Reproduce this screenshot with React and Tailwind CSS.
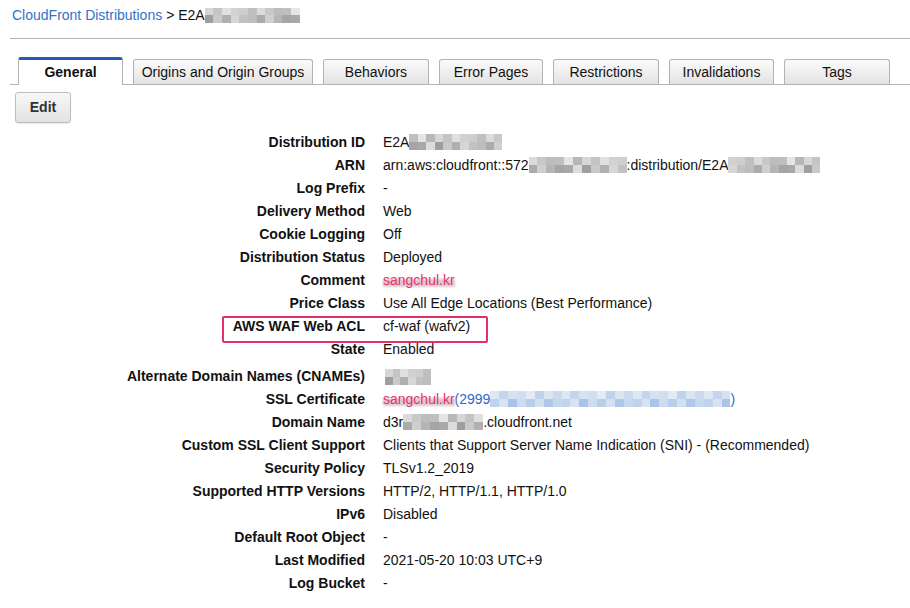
const font = { fontFamily: '"Liberation Sans", Arial, sans-serif' };

const grays = ["#c9c9c9", "#b5b5b5", "#d6d6d6", "#a9a9a9", "#bdbdbd", "#9f9f9f", "#cfcfcf", "#b0b0b0", "#a5a5a5", "#c2c2c2", "#dcdcdc", "#ababab"];
const blues = ["#b9cfe9", "#cddcee", "#a9c4e6", "#d7e3f2", "#bfd3ec", "#c6d8ee", "#afc8e7", "#d2e0f1"];

function Blur({ w, h = 16, palette = grays, cell = 9, seed = 0, className = "" }) {
  const n = Math.ceil(w / cell);
  const cells = [];
  for (let r = 0; r < 2; r++) {
    for (let i = 0; i < n; i++) {
      const c = palette[(i * 7 + r * 5 + seed * 3) % palette.length];
      cells.push(<div key={r + "-" + i} style={{ background: c, opacity: r === 0 ? 0.75 : 1 }} />);
    }
  }
  return (
    <span
      className={`inline-grid align-middle ${className}`}
      style={{ width: w, height: h, gridTemplateColumns: `repeat(${n}, 1fr)`, gridTemplateRows: "1fr 1fr" }}
    >
      {cells}
    </span>
  );
}

const tabs = [
  { name: "General", w: "w-[105px]", active: true },
  { name: "Origins and Origin Groups", w: "w-[180px]" },
  { name: "Behaviors", w: "w-[106px]" },
  { name: "Error Pages", w: "w-[104px]" },
  { name: "Restrictions", w: "w-[106px]" },
  { name: "Invalidations", w: "w-[105px]" },
  { name: "Tags", w: "w-[106px]" },
];

const Pink = ({ children }) => (
  <span className="relative inline-block">
    <span className="absolute left-0 right-0 top-[9px] h-[8px] bg-[#d9c9cf] blur-[1px]" />
    <span className="relative text-[#e8336d]">{children}</span>
  </span>
);

const rows = [
  ["Distribution ID", <>E2A<Blur w={93} seed={1} className="-mt-[2px]" /></>],
  ["ARN", <>arn:aws:cloudfront::572<Blur w={98} seed={2} className="-mt-[2px]" />:distribution/E2A<Blur w={92} seed={3} className="-mt-[2px]" /></>],
  ["Log Prefix", "-"],
  ["Delivery Method", "Web"],
  ["Cookie Logging", "Off"],
  ["Distribution Status", "Deployed"],
  ["Comment", <Pink>sangchul.kr</Pink>],
  ["Price Class", "Use All Edge Locations (Best Performance)"],
  ["AWS WAF Web ACL", "cf-waf (wafv2)", "box"],
  ["State", "Enabled"],
  ["Alternate Domain Names (CNAMEs)", <Blur w={46} seed={4} className="ml-[2px]" />, "gap"],
  ["SSL Certificate", <><Pink>sangchul.kr</Pink><span className="text-[#2a6ac8]">(2999</span><Blur w={240} palette={blues} seed={5} className="-mt-[2px]" /><span className="text-[#2a6ac8]">)</span></>],
  ["Domain Name", <>d3r<Blur w={80} seed={6} className="-mt-[2px]" />.cloudfront.net</>],
  ["Custom SSL Client Support", "Clients that Support Server Name Indication (SNI) - (Recommended)"],
  ["Security Policy", "TLSv1.2_2019"],
  ["Supported HTTP Versions", "HTTP/2, HTTP/1.1, HTTP/1.0"],
  ["IPv6", "Disabled"],
  ["Default Root Object", "-"],
  ["Last Modified", "2021-05-20 10:03 UTC+9"],
  ["Log Bucket", "-"],
];

export default function App() {
  return (
    <div className="w-[910px] h-[608px] bg-white text-[14px] text-[#111] overflow-hidden" style={font}>
      {/* breadcrumb */}
      <div className="pl-[12px] h-[30px] flex items-center">
        <span className="text-[#2f73c9]">CloudFront Distributions</span>
        <span className="ml-[4px]">&gt; E2A</span>
        <Blur w={95} h={15} seed={0} />
      </div>
      <div className="ml-[10px] mt-[8px] border-t border-[#b3b3b3]" />

      {/* tabs */}
      <div className="ml-[10px] mt-[18px] h-[28px] flex items-end gap-[10px] pl-[8px] border-b border-[#b3b3b3]">
        {tabs.map((t) =>
          t.active ? (
            <div
              key={t.name}
              className={`${t.w} h-[28px] -mb-px bg-white border border-b-0 border-[#b3b3b3] border-t-[3px] border-t-[#2559b8] rounded-t-[3px] flex items-center justify-center font-bold`}
            >
              {t.name}
            </div>
          ) : (
            <div
              key={t.name}
              className={`${t.w} h-[25px] border border-b-0 border-[#b3b3b3] rounded-t-[3px] bg-gradient-to-b from-[#fbfbfb] to-[#e3e3e3] flex items-center justify-center`}
            >
              {t.name}
            </div>
          )
        )}
      </div>

      {/* edit */}
      <div className="pl-[15px] pt-[7px]">
        <button className="w-[56px] h-[31px] rounded-[3px] border border-[#bdbdbd] bg-gradient-to-b from-[#f8f8f8] to-[#e2e2e2] font-bold text-[#333] shadow-[0_1px_1px_rgba(0,0,0,0.08)]">
          Edit
        </button>
      </div>

      {/* details */}
      <div className="mt-[8px] grid grid-cols-[365px_1fr] gap-x-[18px]">
        {rows.map(([label, value, kind]) => (
          <div key={label} className="contents">
            <div className={`relative h-[23px] flex items-center justify-end font-bold ${kind === "gap" ? "mt-[4px]" : ""}`}>
              {kind === "box" && (
                <div className="absolute left-[222px] top-[1px] w-[266px] h-[27px] border-[2px] border-[#e62e6b] rounded-[2px] pointer-events-none" />
              )}
              {label}
            </div>
            <div className={`h-[23px] flex items-center whitespace-nowrap ${kind === "gap" ? "mt-[4px]" : ""}`}>
              <span>{value}</span>
            </div>
          </div>
        ))}
      </div>
    </div>
  );
}
